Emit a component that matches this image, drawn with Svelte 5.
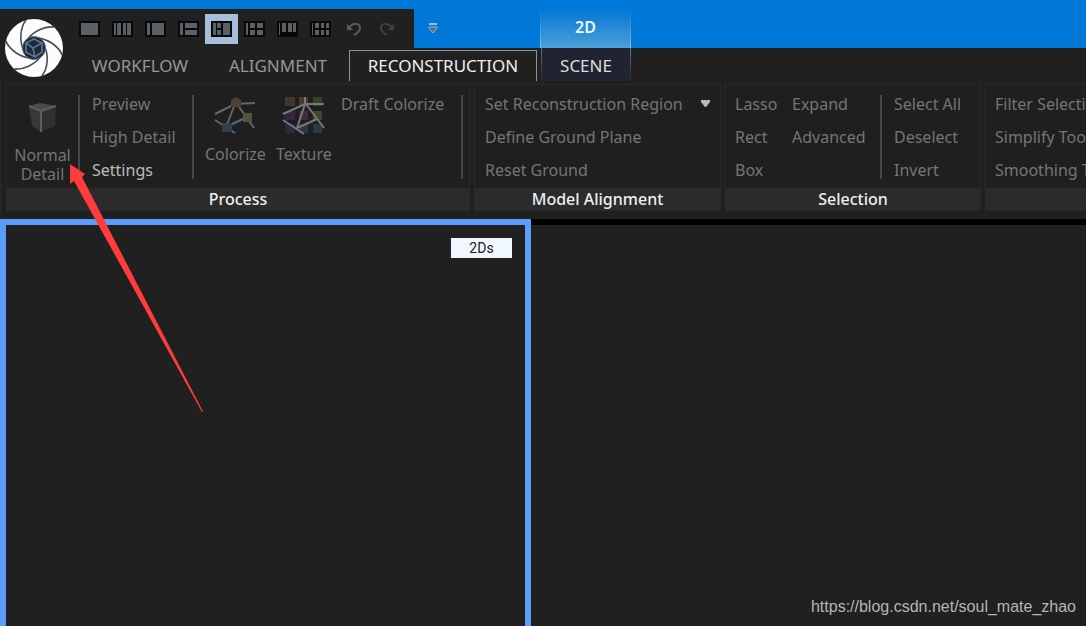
<script>
  const layouts = [
    { name: 'Single view', cells: [[2, 2, 17, 12]] },
    { name: 'Three columns', cells: [[2, 2, 2, 12], [5, 2, 4, 12], [11, 2, 3, 12], [15, 2, 4, 12]] },
    { name: 'Narrow and wide', cells: [[2, 2, 3, 12], [7, 2, 12, 12]] },
    { name: 'Column and two rows', cells: [[2, 2, 3, 12], [7, 2, 12, 5], [7, 9, 12, 5]] },
    { name: '1+1+1 layout', active: true, cells: [[2, 2, 3, 12], [6, 2, 4, 5], [6, 9, 4, 5], [12, 2, 7, 12]] },
    { name: 'Column and four views', cells: [[2, 2, 2, 12], [6, 2, 5, 5], [13, 2, 6, 5], [6, 9, 5, 5], [13, 9, 6, 5]] },
    { name: 'Filmstrip', cells: [[2, 2, 1, 12], [5, 2, 4, 9], [11, 2, 4, 9], [16, 2, 3, 9]] },
    { name: 'Column and six views', cells: [[2, 2, 1, 12], [5, 2, 4, 5], [11, 2, 3, 5], [16, 2, 3, 5], [5, 9, 4, 5], [11, 9, 3, 5], [16, 9, 3, 5]] }
  ];
  const blades = [0, 60, 120, 180, 240, 300];
</script>

<div class="app">
  <header>
    <button class="logo" aria-label="Application menu">
      <svg width="60" height="60" viewBox="0 0 60 60">
        <circle cx="30" cy="30" r="29" fill="#fcfcfc" />
        <g fill="none" stroke="#4b4e50" stroke-width="1.6">
          {#each blades as angle}
            <path d="M22 2C16 10 15 23 20 33" transform="rotate({angle} 30 30)" />
          {/each}
        </g>
        <circle cx="30" cy="30" r="11.5" fill="#202830" stroke="#55718b" stroke-width="1" />
        <path d="M22 25l8-4 8 4v9l-7 5-9-5zM22 25l7 5 9-5M29 30l2 9" fill="none" stroke="#52779b" stroke-width="1.8" />
      </svg>
    </button>
    <div class="quick">
      <div class="tools">
        {#each layouts as layout}
          <button class="tool" class:active={layout.active} aria-label={layout.name}>
            <svg width="21" height="16" viewBox="0 0 21 16">
              <rect width="21" height="16" fill="#07090b" />
              {#each layout.cells as [x, y, w, h]}
                <rect {x} {y} width={w} height={h} fill="#5b6065" />
              {/each}
            </svg>
          </button>
        {/each}
        <button class="tool" aria-label="Undo">
          <svg width="16" height="16" viewBox="0 0 16 16"><path d="M1 3v6h6z" fill="#595c5e" /><path d="M3 7C7 1 14 2 14 7c0 4-3 5-6 7" fill="none" stroke="#595c5e" stroke-width="2" /></svg>
        </button>
        <button class="tool" aria-label="Redo">
          <svg width="16" height="16" viewBox="0 0 16 16"><path d="M15 3v6H9z" fill="#3e4143" /><path d="M13 7C9 1 2 2 2 7c0 4 3 5 6 7" fill="none" stroke="#3e4143" stroke-width="2" /></svg>
        </button>
      </div>
      <button class="more" aria-label="Customize toolbar">
        <svg width="10" height="11" viewBox="0 0 10 11"><path d="M1 1h8" stroke="#ccd3d9" stroke-width="1.5" /><path d="M1 4h8v1L5 10 1 5z" fill="#626b72" stroke="#a8b5c0" stroke-width="1" /></svg>
      </button>
      <div class="context">2D</div>
    </div>
    <nav>
      <button class="tab workflow">WORKFLOW</button>
      <button class="tab alignment">ALIGNMENT</button>
      <button class="tab current">RECONSTRUCTION</button>
      <button class="tab scene">SCENE</button>
    </nav>
  </header>

  <div class="ribbon">
    <section class="group process">
      <div class="body">
        <button class="big normal">
          <svg width="34" height="34" viewBox="0 0 34 34">
            <path d="M3 5l11-3 16 3-13 6z" fill="#4b4b4b" /><path d="M3 5l14 6-2 20-9-6z" fill="#383838" /><path d="M17 11l13-6-1 20-14 6z" fill="#303030" />
            <path d="M3 5l12 5 15-5M15 10v21" fill="none" stroke="#5e5e5e" stroke-width="2" />
          </svg>
          <span>Normal Detail</span>
        </button>
        <div class="list ruled modes"><button>Preview</button><button>High Detail</button><button class="on">Settings</button></div>
        <div class="pair ruled">
          <button class="big">
            <svg width="44" height="40" viewBox="0 0 44 40">
              <path d="M2 18L22 8l20-1M22 8l-9 23M2 24l20 13M13 31l21-10M24 8l17 24" fill="none" stroke="#656565" stroke-width="2" />
              <path d="M18 4l5-3 5 3v7H18z" fill="#4e4039" /><rect x="30" y="17" width="9" height="9" fill="#4c5740" /><rect x="9" y="27" width="10" height="9" fill="#303f4c" />
            </svg>
            <span>Colorize</span>
          </button>
          <button class="big">
            <svg width="44" height="40" viewBox="0 0 44 40">
              <path d="M3 1h10v9H3z" fill="#43362f" /><path d="M17 1h9v9h-9z" fill="#4d382f" /><path d="M31 1h9v9h-9z" fill="#354426" /><path d="M3 15h10v9H3z" fill="#322741" /><path d="M17 15h9v9h-9z" fill="#402c39" /><path d="M31 15h9v9h-9z" fill="#3c4a2a" /><path d="M3 28h10v9H3z" fill="#322741" /><path d="M17 28h9v9h-9zM31 28h9v9h-9z" fill="#2c3842" />
              <path d="M1 18L23 8h19M23 1v7l-8 24M1 24l21 14M15 32l20-9M24 8l18 24" fill="none" stroke="#777" stroke-width="2" />
            </svg>
            <span>Texture</span>
          </button>
        </div>
        <div class="list draft"><button>Draft Colorize</button></div>
        <div class="end"></div>
      </div>
      <h2>Process</h2>
    </section>
    <section class="group model">
      <div class="body">
        <div class="list">
          <button>Set Reconstruction Region
            <svg width="9" height="7" viewBox="0 0 9 7"><path d="M0 0h9v2L5 7H4L0 2z" fill="#b9b9b9" /></svg>
          </button>
          <button>Define Ground Plane</button><button>Reset Ground</button>
        </div>
      </div>
      <h2>Model Alignment</h2>
    </section>
    <section class="group selection">
      <div class="body">
        <div class="list shapes"><button>Lasso</button><button>Rect</button><button>Box</button></div>
        <div class="list extend"><button>Expand</button><button>Advanced</button></div>
        <div class="list ruled picks"><button>Select All</button><button>Deselect</button><button>Invert</button></div>
      </div>
      <h2>Selection</h2>
    </section>
    <section class="group tools-group">
      <div class="body">
        <div class="list"><button>Filter Selection</button><button>Simplify Tool</button><button>Smoothing Tool</button></div>
      </div>
      <h2></h2>
    </section>
  </div>

  <main>
    <section class="view selected"><button class="mode">2Ds</button></section>
    <section class="view"><a href="https://blog.csdn.net/soul_mate_zhao">https://blog.csdn.net/soul_mate_zhao</a></section>
  </main>

  <svg class="arrow" width="134" height="249" viewBox="0 0 134 249" aria-hidden="true">
    <path d="M0-1L15 9l-3 3 121 234.500-1 .5L4 16l-4 3z" fill="#ff3b3b" />
  </svg>
</div>

<style>
  :global(body) { margin: 0; background: #202020; }
  .app { position: relative; display: flex; flex-direction: column; min-height: 100vh; overflow: hidden; background: #202020; color: #757575; font: 16px/20px "Noto Sans", sans-serif; }
  button { margin: 0; padding: 0; border: 0; background: none; color: inherit; font: inherit; white-space: nowrap; }
  svg { display: block; }
  header { display: grid; grid-template-columns: 70px 1fr; grid-template-rows: 39px 33px; border-top: 9px solid #0078d7; }
  .logo { grid-row: 1 / 3; padding: 5px 0 0 4px; display: flex; align-items: center; }
  .quick { display: flex; background: #0078d7; }
  .tools { display: flex; align-items: center; width: 344px; padding-left: 3px; box-sizing: border-box; background: #202020; }
  .tool { flex: none; display: grid; place-items: center; width: 33px; height: 30px; }
  .tool.active { background: #a5bfda; }
  .more { width: 38px; display: grid; place-items: center; }
  .context { margin-left: 88px; width: 91px; padding-bottom: 3px; display: grid; place-items: center; color: #eef6ff; font-weight: 600; background: linear-gradient(#0078d7, #2788d5 45%, #4ba0d8); box-sizing: border-box; border: solid #65a9df; border-width: 0 1px; border-image: linear-gradient(#0078d7, #8abfe8) 1; }
  nav { display: flex; }
  .tab { color: #969696; font-size: 17px; padding-top: 2px; }
  .workflow { width: 140px; }
  .alignment { width: 136px; }
  .current { width: 188px; margin: 2px 4px 0 3px; height: 31px; border: 1px solid #929292; border-bottom: 0; color: #eee; padding-top: 0; }
  .scene { width: 90px; background: #202430; color: #ddd; border: solid; border-width: 0 1px; border-image: linear-gradient(#6b7686, #202020) 1; }
  .ribbon { display: flex; gap: 4px; padding: 3px 0 8px 5px; border-left: 1px solid #252b31; }
  .group { flex: none; box-sizing: border-box; border: 1px solid #292929; background: #1f1f1f; }
  .process { width: 464px; }
  .model { width: 247px; }
  .selection { width: 256px; }
  .tools-group { flex: 1 0 180px; margin-right: -80px; }
  .body { display: flex; height: 103px; padding: 2px 0 0 9px; box-sizing: border-box; }
  h2 { box-sizing: border-box; height: 22px; margin: 0; background: #2b2b2b; color: #eee; font-size: 16px; font-weight: 500; line-height: 22px; text-align: center; }
  .list { display: flex; flex-direction: column; }
  .list button { height: 33px; text-align: left; display: flex; align-items: center; gap: 18px; }
  .on { color: #bbb; }
  .big { display: flex; flex-direction: column; align-items: center; gap: 8px; padding-top: 9px; line-height: 20px; }
  .process .body { padding-left: 0; }
  .model .body { padding-left: 10px; }
  .normal { width: 71px; padding: 14px 7px 0; gap: 11px; box-sizing: border-box; white-space: normal; line-height: 19px; }
  .modes { width: 114px; }
  .ruled { background: linear-gradient(#484848, #484848) no-repeat 0 8px / 2px 84px; padding-left: 14px; box-sizing: border-box; }
  .pair { display: flex; gap: 10px; width: 149px; padding-left: 13px; }
  .draft { width: 120px; }
  .end { width: 2px; height: 84px; margin-top: 8px; background: #454545; }
  .shapes { width: 57px; }
  .extend { width: 88px; }
  main { display: grid; grid-template-columns: 531px 1fr; flex: 1; min-height: 407px; }
  .view { box-sizing: border-box; border-top: 6px solid #000; display: flex; justify-content: flex-end; align-items: flex-end; }
  .selected { border: solid #5b9cfa; border-width: 6px 6px 0; align-items: flex-start; }
  .mode { width: 61px; height: 20px; margin: 13px 13px 0; background: #f0f7ff; color: #202020; font: 14px/20px Roboto, sans-serif; }
  a { margin: 0 10px 9px; color: #b5b5b5; text-decoration: none; font: 16px/20px "Liberation Sans", sans-serif; }
  .arrow { position: absolute; left: 70px; top: 165px; pointer-events: none; overflow: visible; }
</style>
